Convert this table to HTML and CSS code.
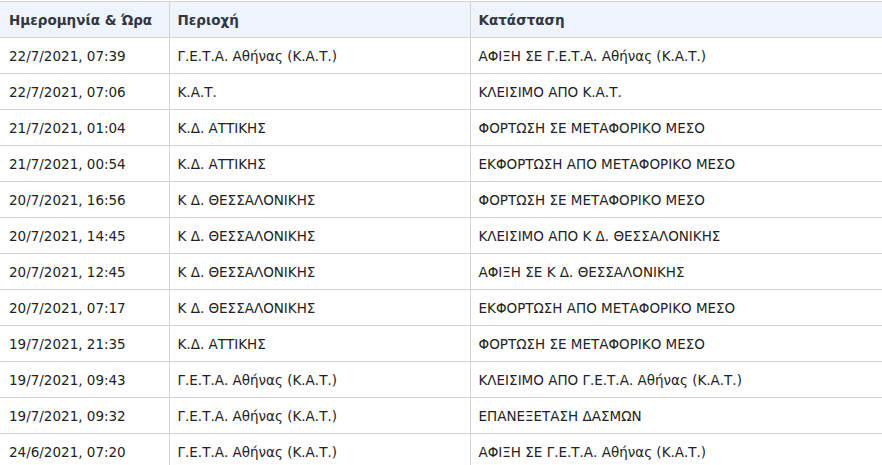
FILE: index.html
```html
<!DOCTYPE html>
<html lang="el">
<head>
<meta charset="utf-8">
<title>Ιστορικό αποστολής</title>
<link rel="stylesheet" href="styles.css">
</head>
<body>
<table class="track">
  <colgroup>
    <col class="c1"><col class="c2"><col class="c3">
  </colgroup>
  <thead>
    <tr><th>Ημερομηνία &amp; Ώρα</th><th>Περιοχή</th><th>Κατάσταση</th></tr>
  </thead>
  <tbody>
    <tr><td>22/7/2021, 07:39</td><td>Γ.Ε.Τ.Α. Αθήνας (Κ.Α.Τ.)</td><td>ΑΦΙΞΗ ΣΕ Γ.Ε.Τ.Α. Αθήνας (Κ.Α.Τ.)</td></tr>
    <tr><td>22/7/2021, 07:06</td><td>Κ.Α.Τ.</td><td>ΚΛΕΙΣΙΜΟ ΑΠΟ Κ.Α.Τ.</td></tr>
    <tr><td>21/7/2021, 01:04</td><td>Κ.Δ. ΑΤΤΙΚΗΣ</td><td>ΦΟΡΤΩΣΗ ΣΕ ΜΕΤΑΦΟΡΙΚΟ ΜΕΣΟ</td></tr>
    <tr><td>21/7/2021, 00:54</td><td>Κ.Δ. ΑΤΤΙΚΗΣ</td><td>ΕΚΦΟΡΤΩΣΗ ΑΠΟ ΜΕΤΑΦΟΡΙΚΟ ΜΕΣΟ</td></tr>
    <tr><td>20/7/2021, 16:56</td><td>Κ Δ. ΘΕΣΣΑΛΟΝΙΚΗΣ</td><td>ΦΟΡΤΩΣΗ ΣΕ ΜΕΤΑΦΟΡΙΚΟ ΜΕΣΟ</td></tr>
    <tr><td>20/7/2021, 14:45</td><td>Κ Δ. ΘΕΣΣΑΛΟΝΙΚΗΣ</td><td>ΚΛΕΙΣΙΜΟ ΑΠΟ Κ Δ. ΘΕΣΣΑΛΟΝΙΚΗΣ</td></tr>
    <tr><td>20/7/2021, 12:45</td><td>Κ Δ. ΘΕΣΣΑΛΟΝΙΚΗΣ</td><td>ΑΦΙΞΗ ΣΕ Κ Δ. ΘΕΣΣΑΛΟΝΙΚΗΣ</td></tr>
    <tr><td>20/7/2021, 07:17</td><td>Κ Δ. ΘΕΣΣΑΛΟΝΙΚΗΣ</td><td>ΕΚΦΟΡΤΩΣΗ ΑΠΟ ΜΕΤΑΦΟΡΙΚΟ ΜΕΣΟ</td></tr>
    <tr><td>19/7/2021, 21:35</td><td>Κ.Δ. ΑΤΤΙΚΗΣ</td><td>ΦΟΡΤΩΣΗ ΣΕ ΜΕΤΑΦΟΡΙΚΟ ΜΕΣΟ</td></tr>
    <tr><td>19/7/2021, 09:43</td><td>Γ.Ε.Τ.Α. Αθήνας (Κ.Α.Τ.)</td><td>ΚΛΕΙΣΙΜΟ ΑΠΟ Γ.Ε.Τ.Α. Αθήνας (Κ.Α.Τ.)</td></tr>
    <tr><td>19/7/2021, 09:32</td><td>Γ.Ε.Τ.Α. Αθήνας (Κ.Α.Τ.)</td><td>ΕΠΑΝΕΞΕΤΑΣΗ ΔΑΣΜΩΝ</td></tr>
    <tr><td>24/6/2021, 07:20</td><td>Γ.Ε.Τ.Α. Αθήνας (Κ.Α.Τ.)</td><td>ΑΦΙΞΗ ΣΕ Γ.Ε.Τ.Α. Αθήνας (Κ.Α.Τ.)</td></tr>
  </tbody>
</table>
</body>
</html>
```

FILE: styles.css
```css
html, body {
  margin: 0;
  padding: 0;
  background: #ffffff;
  overflow: hidden;
}
body {
  padding-top: 1px;
  font-family: "DejaVu Sans", Verdana, sans-serif;
  font-size: 13.5px;
  color: #222222;
}
.track {
  border-collapse: collapse;
  width: 882px;
  table-layout: fixed;
}
.c1 { width: 169px; }
.c2 { width: 301px; }
.c3 { width: 412px; }
.track th,
.track td {
  height: 35px;
  padding: 0 8px;
  text-align: left;
  vertical-align: middle;
  border-top: 1px solid #d3d3d3;
  border-left: 1px solid #d3d3d3;
  white-space: nowrap;
  overflow: hidden;
}
.track th:first-child,
.track td:first-child {
  border-left: none;
  padding-left: 9px;
}
.track th {
  background: #eef3fc;
  font-weight: bold;
  color: #333640;
}
```
